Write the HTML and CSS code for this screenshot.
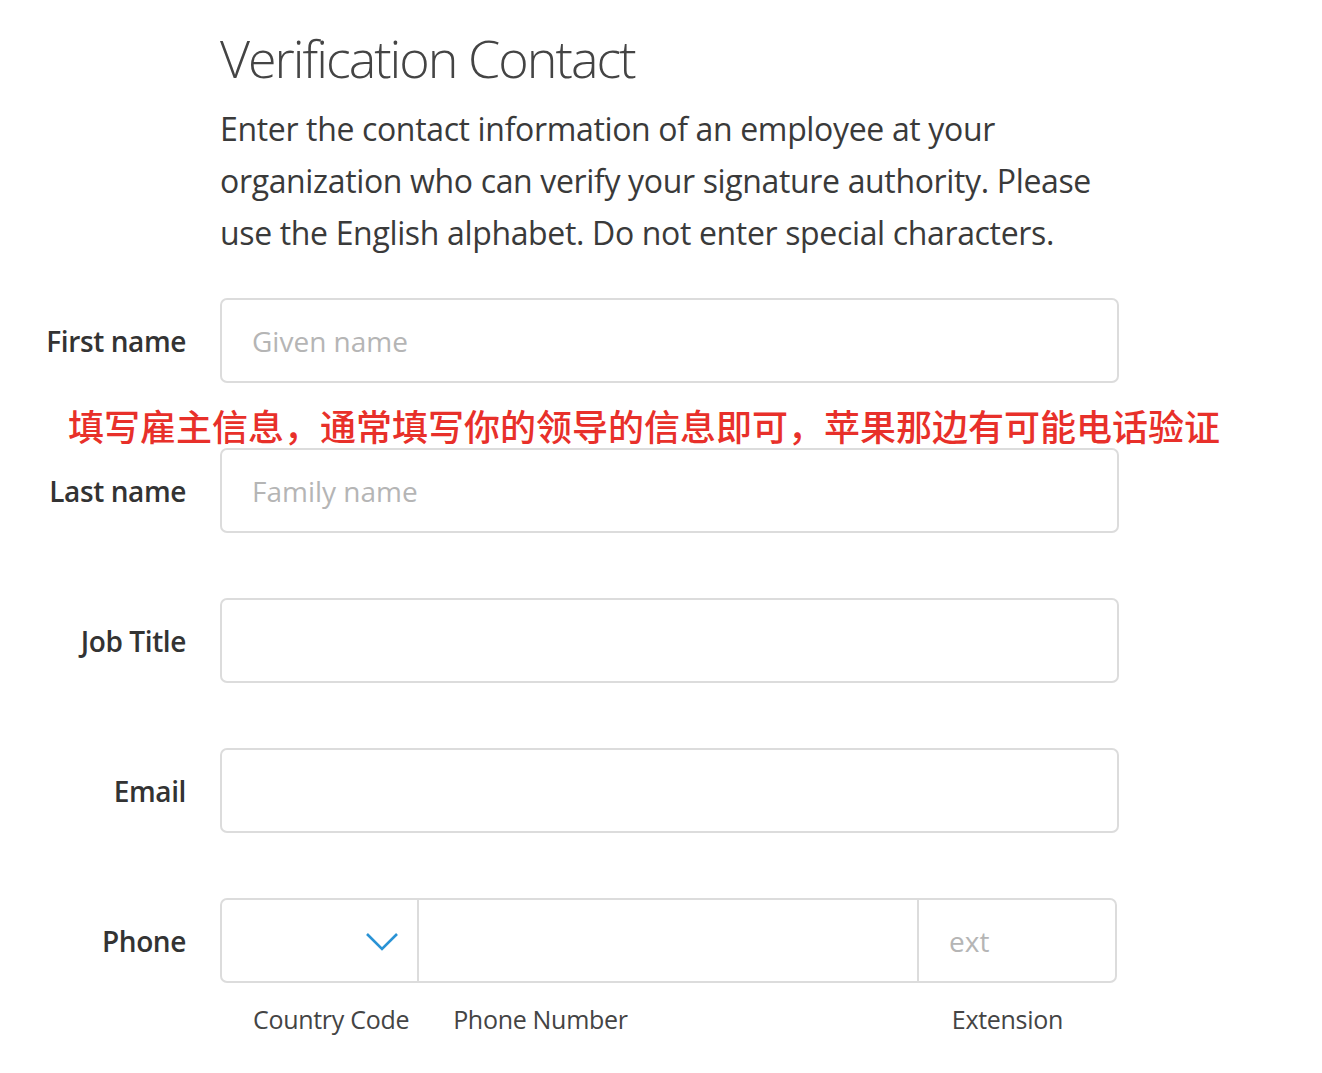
FILE: index.html
```html
<!DOCTYPE html>
<html lang="en">
<head>
<meta charset="UTF-8">
<meta name="viewport" content="width=device-width, initial-scale=1.0">
<title>Verification Contact</title>
<link rel="stylesheet" href="styles.css">
</head>
<body>
  <div class="page">
    <div class="intro">
      <h1 class="title">Verification Contact</h1>
      <p class="lead">Enter the contact information of an employee at your organization who can verify your signature authority. Please use the English alphabet. Do not enter special characters.</p>
    </div>

    <form class="form">
      <div class="row">
        <label class="label" for="first">First name</label>
        <input class="field" id="first" type="text" placeholder="Given name">
      </div>

      <p class="note">填写雇主信息，通常填写你的领导的信息即可，苹果那边有可能电话验证</p>

      <div class="row">
        <label class="label" for="last">Last name</label>
        <input class="field" id="last" type="text" placeholder="Family name">
      </div>

      <div class="row">
        <label class="label" for="job">Job Title</label>
        <input class="field" id="job" type="text">
      </div>

      <div class="row">
        <label class="label" for="email">Email</label>
        <input class="field" id="email" type="text">
      </div>

      <div class="row phone-row">
        <label class="label" for="phone">Phone</label>
        <div class="phone">
          <div class="phone-inputs">
            <div class="country">
              <svg class="chevron" width="34" height="22" viewBox="0 0 34 22">
                <path d="M2 3 L17 18 L32 3" fill="none" stroke="#2a93d5" stroke-width="2.6"/>
              </svg>
            </div>
            <input class="number" id="phone" type="text">
            <input class="ext" type="text" placeholder="ext">
          </div>
          <div class="phone-captions">
            <span class="cap cap-country">Country Code</span>
            <span class="cap cap-number">Phone Number</span>
            <span class="cap cap-ext">Extension</span>
          </div>
        </div>
      </div>
    </form>
  </div>
</body>
</html>
```

FILE: styles.css
```css
body {
  margin: 0;
  background: #fff;
  font-family: "Open Sans", "Noto Sans", sans-serif;
  color: #333;
}

.page {
  padding-top: 22px;
}

.intro {
  margin-left: 220px;
  width: 900px;
}

.title {
  margin: 0;
  font-size: 52px;
  font-weight: 300;
  line-height: 72px;
  color: #444;
  letter-spacing: -2px;
}

.lead {
  margin: 9px 0 0;
  font-size: 32px;
  line-height: 52px;
  color: #3a3a3a;
  letter-spacing: -0.35px;
}

.form {
  margin-top: 39px;
}

.row {
  display: flex;
  align-items: flex-start;
  gap: 34px;
  margin-bottom: 65px;
}

.label {
  width: 186px;
  height: 85px;
  display: flex;
  align-items: center;
  justify-content: flex-end;
  font-size: 28px;
  font-weight: 600;
  color: #333;
  letter-spacing: -0.4px;
}

.field {
  box-sizing: border-box;
  width: 899px;
  height: 85px;
  margin: 0;
  padding: 0 30px;
  border: 2px solid #dcdcdc;
  border-radius: 7px;
  font-family: inherit;
  font-size: 28px;
  color: #333;
  outline: none;
}

.field::placeholder,
.ext::placeholder {
  color: #b5b5b5;
}

.note {
  margin: -48px 0 -2px 68px;
  font-family: "Noto Sans CJK SC", sans-serif;
  font-size: 36px;
  line-height: 50px;
  font-weight: 500;
  color: #e8302a;
}

.phone-inputs {
  display: flex;
  width: 897px;
  height: 85px;
  box-sizing: border-box;
  border: 2px solid #dcdcdc;
  border-radius: 7px;
}

.country {
  width: 197px;
  display: flex;
  align-items: center;
  justify-content: flex-end;
  padding-right: 18px;
  box-sizing: border-box;
  border-right: 2px solid #dcdcdc;
}

.chevron {
  display: block;
  margin-top: 2px;
}

.number,
.ext {
  height: 100%;
  box-sizing: border-box;
  margin: 0;
  border: 0;
  outline: none;
  background: transparent;
  font-family: inherit;
  font-size: 28px;
}

.number {
  width: 500px;
  border-right: 2px solid #dcdcdc;
}

.ext {
  flex: 1;
  min-width: 0;
  padding: 0 30px;
}

.phone-captions {
  display: flex;
  margin-top: 19px;
  font-size: 25px;
  color: #444;
  letter-spacing: -0.3px;
}

.cap-country {
  margin-left: 33px;
}

.cap-number {
  margin-left: 44px;
}

.cap-ext {
  margin-left: auto;
  margin-right: 54px;
}
```
